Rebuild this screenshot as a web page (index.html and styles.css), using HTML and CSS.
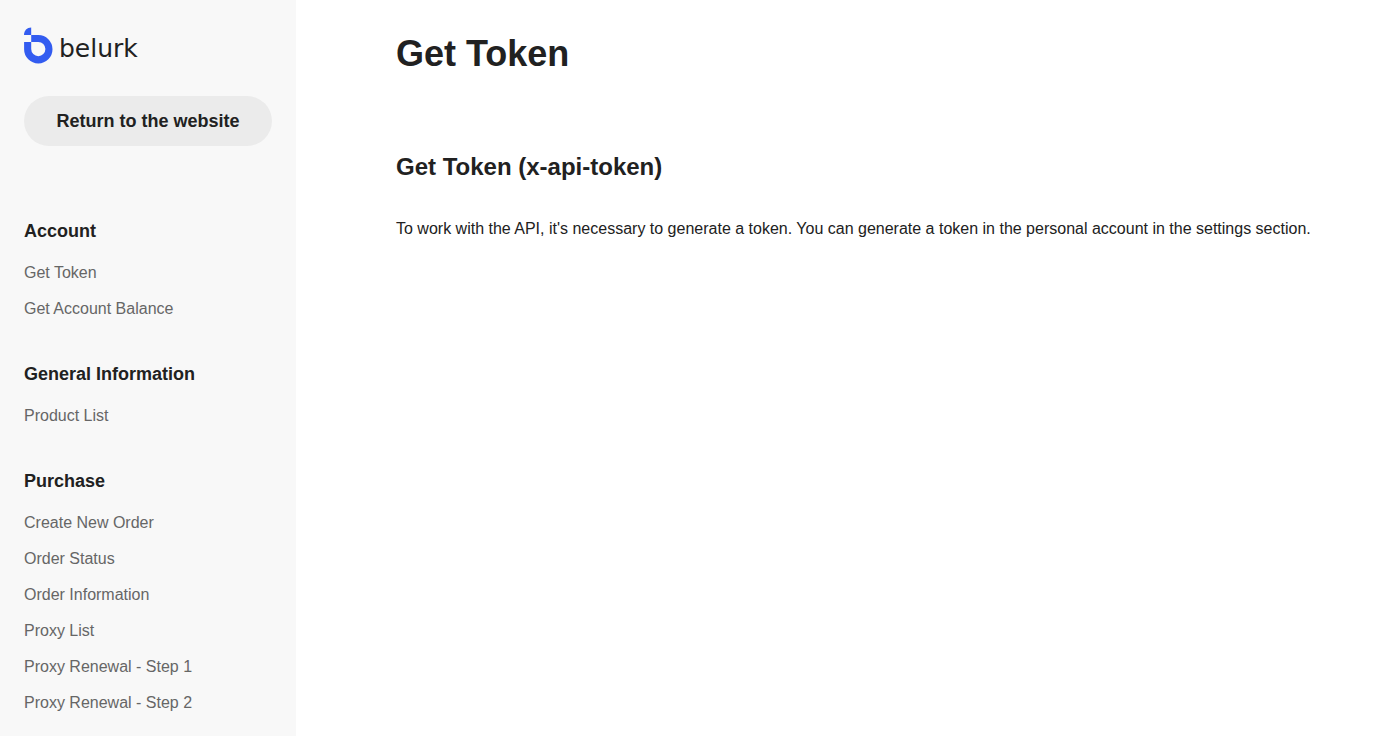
FILE: index.html
```html
<!DOCTYPE html>
<html lang="en">
<head>
    <meta charset="UTF-8">
    <meta name="viewport" content="width=device-width, initial-scale=1.0">
    <title>Get Token</title>
    <link rel="stylesheet" href="styles.css">
</head>
<body>
    <aside class="sidebar">
        <a class="logo" href="#">
            <svg width="29" height="38" viewBox="0 0 29 38" aria-hidden="true">
                <path fill="#335cf0" d="M7.200 1.500V9H0C0 4.500 3 1.500 7.200 1.500z"/>
                <path fill="#335cf0" fill-rule="evenodd" d="M7.200 9h7.100a14.200 14.200 0 1 1-14.200 14.200V16h7.100zM7.200 16v7.100a7.100 7.100 0 1 0 7.100-7.100z"/>
            </svg>
            <span class="logo-text">belurk</span>
        </a>
        <a class="return-link" href="#">Return to the website</a>
        <nav class="menu">
            <section class="menu-group">
                <h3>Account</h3>
                <a href="#">Get Token</a>
                <a href="#">Get Account Balance</a>
            </section>
            <section class="menu-group">
                <h3>General Information</h3>
                <a href="#">Product List</a>
            </section>
            <section class="menu-group">
                <h3>Purchase</h3>
                <a href="#">Create New Order</a>
                <a href="#">Order Status</a>
                <a href="#">Order Information</a>
                <a href="#">Proxy List</a>
                <a href="#">Proxy Renewal - Step 1</a>
                <a href="#">Proxy Renewal - Step 2</a>
            </section>
        </nav>
    </aside>
    <main class="content">
        <h1>Get Token</h1>
        <h2>Get Token (x-api-token)</h2>
        <p>To work with the API, it's necessary to generate a token. You can generate a token in the personal account in the settings section.</p>
    </main>
</body>
</html>
```
FILE: styles.css
```css
* {
    box-sizing: border-box;
}

body {
    font-family: "Liberation Sans", Arial, sans-serif;
    margin: 0;
    display: flex;
    height: 100vh;
    color: #212121;
    background-color: #fff;
}

h1, h2, h3, p {
    margin: 0;
}

a {
    color: inherit;
    text-decoration: none;
}

.sidebar {
    flex: 0 0 296px;
    padding: 26px 24px 20px;
    background-color: #f8f8f8;
    overflow-y: auto;
}

.logo {
    display: flex;
    align-items: center;
    gap: 6px;
    height: 38px;
}

.logo-text {
    font-family: "DejaVu Sans", sans-serif;
    font-size: 25px;
    line-height: 38px;
    padding-top: 8px;
}

.return-link {
    display: block;
    margin-top: 32px;
    border-radius: 25px;
    background-color: #ebebeb;
    font-size: 18px;
    font-weight: bold;
    line-height: 50px;
    text-align: center;
}

.menu {
    display: flex;
    flex-direction: column;
    gap: 41px;
    margin-top: 73px;
}

.menu-group {
    display: flex;
    flex-direction: column;
    gap: 12px;
}

.menu-group h3 {
    margin-bottom: 6px;
    font-size: 18px;
    line-height: 24px;
}

.menu-group a {
    font-size: 16px;
    line-height: 24px;
    color: #666;
}

.content {
    flex: 1;
    padding: 30px 40px 30px 100px;
    overflow-y: auto;
}

.content h1 {
    font-size: 36px;
    line-height: 48px;
}

.content h2 {
    margin-top: 73px;
    font-size: 24px;
    line-height: 32px;
}

.content p {
    margin-top: 34px;
    font-size: 16px;
    line-height: 24px;
}
```
